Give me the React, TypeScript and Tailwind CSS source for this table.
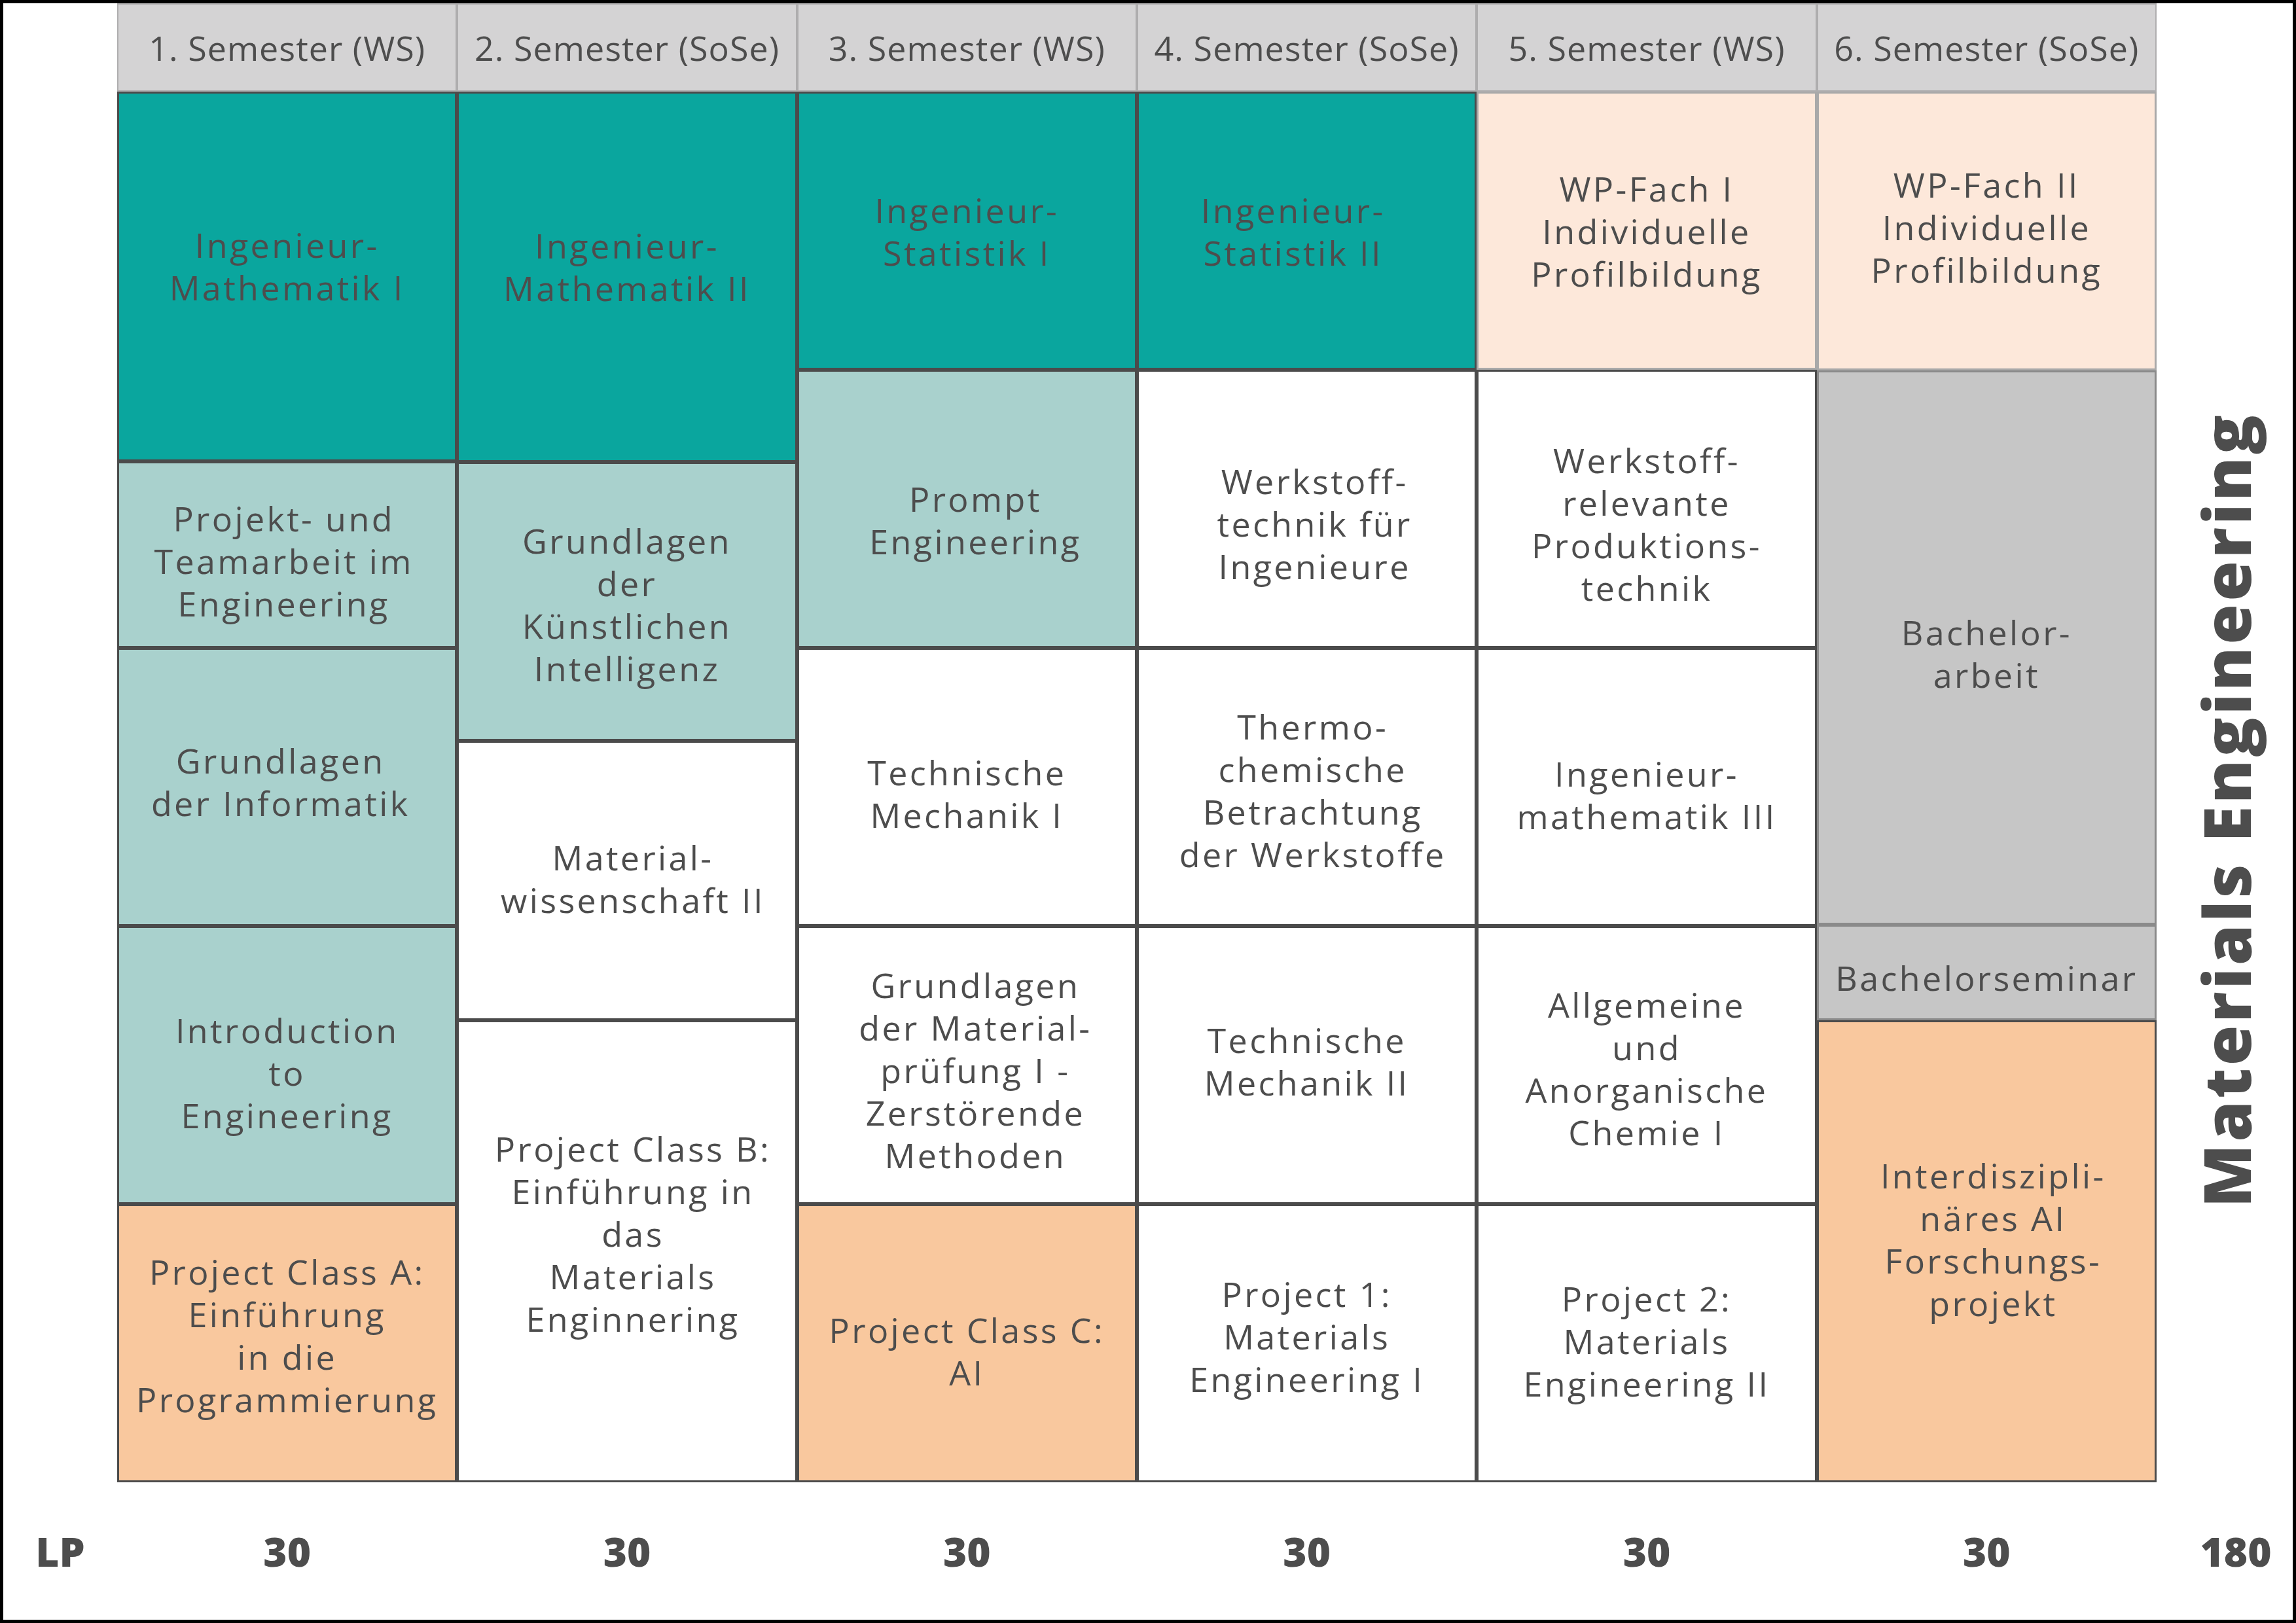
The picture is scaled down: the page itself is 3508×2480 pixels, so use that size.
import React from "react";

type Kind = "teal" | "light" | "peach" | "orange" | "gray" | "white";
type Cell = { lines: string[]; span: number; kind: Kind; adj?: string };

const spanClass: Record<number, string> = {
  2: "flex-[2]",
  4: "flex-[4]",
  6: "flex-[6]",
  8: "flex-[8]",
  10: "flex-[10]",
  12: "flex-[12]",
};

const kindClass: Record<Kind, string> = {
  teal: "bg-[#0aa69e] border-[#4b4b4b]",
  light: "bg-[#a9d1cd] border-[#4b4b4b]",
  peach: "bg-[#fde8da] border-[#a9a9a9]",
  orange: "bg-[#f9c89e] border-[#4b4b4b]",
  gray: "bg-[#c6c6c6] border-[#8a8a8a]",
  white: "bg-white border-[#4b4b4b]",
};

const columns: Cell[][] = [
  [
    { lines: ["Ingenieur-", "Mathematik I"], span: 8, kind: "teal", adj: "mb-[32px]" },
    { lines: ["Projekt- und", "Teamarbeit im", "Engineering"], span: 4, kind: "light", adj: "mt-[18px] mr-[10px]" },
    { lines: ["Grundlagen", "der Informatik"], span: 6, kind: "light", adj: "mb-[18px] mr-[20px]" },
    { lines: ["Introduction", "to", "Engineering"], span: 6, kind: "light", adj: "mt-[22px]" },
    { lines: ["Project Class A:", "Einführung", "in die", "Programmierung"], span: 6, kind: "orange", adj: "mb-[26px]" },
  ],
  [
    { lines: ["Ingenieur-", "Mathematik II"], span: 8, kind: "teal", adj: "mb-[32px]" },
    { lines: ["Grundlagen", "der", "Künstlichen", "Intelligenz"], span: 6, kind: "light", adj: "mt-[8px]" },
    { lines: ["Material-", "wissenschaft II"], span: 6, kind: "white", adj: "mb-[8px] ml-[18px]" },
    { lines: ["Project Class B:", "Einführung in", "das", "Materials", "Enginnering"], span: 10, kind: "white", adj: "mb-[54px] ml-[18px]" },
  ],
  [
    { lines: ["Ingenieur-", "Statistik I"], span: 6, kind: "teal" },
    { lines: ["Prompt", "Engineering"], span: 6, kind: "light", adj: "mt-[32px] ml-[26px]" },
    { lines: ["Technische", "Mechanik I"], span: 6, kind: "white", adj: "mt-[18px]" },
    { lines: ["Grundlagen", "der Material-", "prüfung I -", "Zerstörende", "Methoden"], span: 6, kind: "white", adj: "mt-[14px] ml-[26px]" },
    { lines: ["Project Class C:", "AI"], span: 6, kind: "orange", adj: "mt-[22px]" },
  ],
  [
    { lines: ["Ingenieur-", "Statistik II"], span: 6, kind: "teal", adj: "mr-[42px]" },
    { lines: ["Werkstoff-", "technik für", "Ingenieure"], span: 6, kind: "white", adj: "mt-[44px] ml-[24px]" },
    { lines: ["Thermo-", "chemische", "Betrachtung", "der Werkstoffe"], span: 6, kind: "white", adj: "mt-[8px] ml-[18px]" },
    { lines: ["Technische", "Mechanik II"], span: 6, kind: "white", adj: "mb-[14px]" },
    { lines: ["Project 1:", "Materials", "Engineering I"], span: 6, kind: "white", adj: "mb-[22px]" },
  ],
  [
    { lines: ["WP-Fach I", "Individuelle", "Profilbildung"], span: 6, kind: "peach" },
    { lines: ["Werkstoff-", "relevante", "Produktions-", "technik"], span: 6, kind: "white", adj: "mt-[44px]" },
    { lines: ["Ingenieur-", "mathematik III"], span: 6, kind: "white", adj: "mt-[22px]" },
    { lines: ["Allgemeine", "und", "Anorganische", "Chemie I"], span: 6, kind: "white", adj: "mt-[8px]" },
    { lines: ["Project 2:", "Materials", "Engineering II"], span: 6, kind: "white", adj: "mb-[8px]" },
  ],
  [
    { lines: ["WP-Fach II", "Individuelle", "Profilbildung"], span: 6, kind: "peach", adj: "mb-[14px]" },
    { lines: ["Bachelor-", "arbeit"], span: 12, kind: "gray", adj: "mt-[18px]" },
    { lines: ["Bachelorseminar"], span: 2, kind: "gray", adj: "mt-[16px]" },
    { lines: ["Interdiszipli-", "näres AI", "Forschungs-", "projekt"], span: 10, kind: "orange", adj: "mb-[38px] ml-[20px]" },
  ],
];

const headers = [
  "1. Semester (WS)",
  "2. Semester (SoSe)",
  "3. Semester (WS)",
  "4. Semester (SoSe)",
  "5. Semester (WS)",
  "6. Semester (SoSe)",
];

export default function App() {
  return (
    <div className="w-[3508px] h-[2480px] bg-white border-[5px] border-black flex flex-col text-[#4d4d4d] font-['Open_Sans',sans-serif]">
      <div className="flex flex-row h-[2260px] shrink-0">
        <div className="w-[174px] shrink-0" />
        <div className="w-[3116px] shrink-0 flex flex-col">
          <div className="grid grid-cols-6 h-[135px] shrink-0">
            {headers.map((h) => (
              <div
                key={h}
                className="bg-[#d4d3d4] border-2 border-[#aeadae] flex items-center justify-center text-[52px] font-medium tracking-[0.02em] whitespace-nowrap"
              >
                {h}
              </div>
            ))}
          </div>
          <div className="grid grid-cols-6 h-[2125px] shrink-0">
            {columns.map((col, ci) => (
              <div key={ci} className="flex flex-col h-full min-h-0">
                {col.map((cell, i) => (
                  <div
                    key={i}
                    className={`${spanClass[cell.span]} ${kindClass[cell.kind]} min-h-0 border-[3px] flex flex-col items-center justify-center text-center text-[52px] font-medium leading-[65px] tracking-[0.065em]`}
                  >
                    <div className={`${cell.adj ?? ""} flex flex-col items-center`}>
                      {cell.lines.map((l, li) => (
                        <div key={li} className="whitespace-nowrap">
                          {l}
                        </div>
                      ))}
                    </div>
                  </div>
                ))}
              </div>
            ))}
          </div>
        </div>
        <div className="flex-1 flex items-center justify-center pl-[2px] pt-[206px]">
          <div className="[writing-mode:vertical-rl] rotate-180 font-extrabold text-[100px] leading-none tracking-[0.04em] whitespace-nowrap">
            Materials Engineering
          </div>
        </div>
      </div>
      <div className="flex flex-row flex-1 items-center font-extrabold text-[62px]">
        <div className="w-[174px] shrink-0 text-center">LP</div>
        <div className="w-[3116px] shrink-0 grid grid-cols-6">
          {headers.map((h) => (
            <div key={h} className="text-center">
              30
            </div>
          ))}
        </div>
        <div className="flex-1 text-center pl-[34px]">180</div>
      </div>
    </div>
  );
}
